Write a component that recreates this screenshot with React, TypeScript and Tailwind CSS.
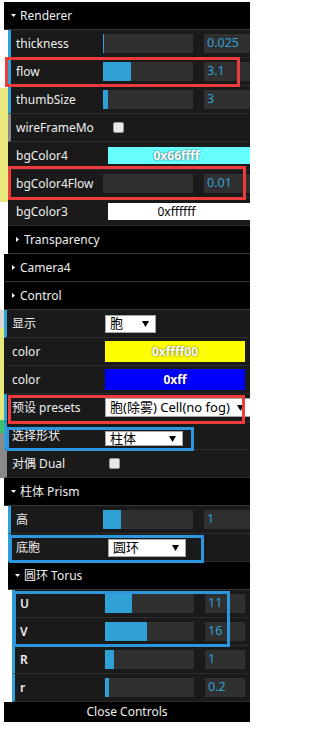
import React from 'react';

type RowProps = {
  gutter: string;
  border: string;
  labelW: string;
  label: React.ReactNode;
  labelCls?: string;
  children?: React.ReactNode;
};

// one controller line of the panel
const Row = ({ gutter, border, labelW, label, labelCls = '', children }: RowProps) => (
  <div className="flex h-[28px]">
    <div className={`shrink-0 ${gutter}`} />
    <div
      className={`flex min-w-0 flex-1 items-center overflow-hidden border-b border-l-[3px] border-b-[#2c2c2c] bg-[#1a1a1a] pl-[5px] ${border}`}
    >
      <div className={`shrink-0 overflow-hidden whitespace-nowrap text-[12px] text-[#eee] ${labelW} ${labelCls}`}>
        {label}
      </div>
      {children}
    </div>
  </div>
);

const Folder = ({ gutter, title, open }: { gutter: string; title: string; open: boolean }) => (
  <div className="flex h-[28px]">
    <div className={`shrink-0 ${gutter}`} />
    <div className="flex flex-1 items-center gap-[4px] border-b border-[#353535] bg-black pl-[7px] text-[12px] text-[#eee]">
      <span className="flex h-[5px] w-[5px] shrink-0 items-center justify-center">
        {open ? (
          <svg width="5" height="3" viewBox="0 0 5 3">
            <polygon points="0,0 5,0 2.5,3" fill="#fff" />
          </svg>
        ) : (
          <svg width="3" height="5" viewBox="0 0 3 5">
            <polygon points="0,0 3,2.5 0,5" fill="#fff" />
          </svg>
        )}
      </span>
      <span className="whitespace-nowrap">{title}</span>
    </div>
  </div>
);

const Slider = ({ fill, w, vw, value }: { fill: number; w: string; vw: string; value: string }) => (
  <>
    <div className={`h-[19px] shrink-0 bg-[#303030] ${w}`}>
      <div className="h-full bg-[#2fa1d6]" style={{ width: fill }} />
    </div>
    <div
      className={`ml-[11px] flex h-[19px] shrink-0 items-center bg-[#303030] pl-[3px] text-[12.5px] text-[#2fa1d6] ${vw}`}
    >
      {value}
    </div>
  </>
);

const Select = ({ text, cls }: { text: string; cls: string }) => (
  <div
    className={`flex shrink-0 items-center justify-between border border-[#a6a6a6] bg-white pl-[4px] pr-[6px] text-[13px] leading-none text-black ${cls}`}
  >
    <span className="whitespace-nowrap">{text}</span>
    <svg width="7" height="6" viewBox="0 0 7 6" className="shrink-0">
      <polygon points="0,0 7,0 3.5,6" fill="#000" />
    </svg>
  </div>
);

const Check = () => (
  <div className="h-[11px] w-[11px] shrink-0 rounded-[2px] border border-[#9a9a9a] bg-[#e8e8e8]" />
);

const BLUE = 'border-l-[#2fa1d6]';
const GRAY = 'border-l-[#888888]';
const DARK = 'border-l-[#1a1a1a]';

export default function App() {
  return (
    <div className="relative h-[731px] w-[250px] overflow-hidden bg-white pt-[2px] font-['Noto_Sans','Noto_Sans_CJK_SC',sans-serif]">
      <Folder gutter="w-[4px] bg-white" title="Renderer" open />
      <Row gutter="w-[8px] bg-white" border={BLUE} labelW="w-[87px]" label="thickness">
        <Slider fill={1} w="w-[90px]" vw="w-[60px]" value="0.025" />
      </Row>
      <Row gutter="w-[8px] bg-white" border={BLUE} labelW="w-[87px]" label="flow">
        <Slider fill={28} w="w-[90px]" vw="w-[60px]" value="3.1" />
      </Row>
      <Row
        gutter="w-[8px] bg-[linear-gradient(to_bottom,#fff_2px,#e9e87d_2px)]"
        border={BLUE}
        labelW="w-[87px]"
        label="thumbSize"
      >
        <Slider fill={5} w="w-[90px]" vw="w-[60px]" value="3" />
      </Row>
      <Row gutter="w-[8px] bg-[#e9e87d]" border={GRAY} labelW="w-[97px]" label="wireFrameMo">
        <Check />
      </Row>
      <Row gutter="w-[8px] bg-[#e9e87d]" border={DARK} labelW="w-[92px]" label="bgColor4">
        <div className="flex h-[17px] w-[142px] shrink-0 items-center justify-center bg-[#66ffff] pr-[5px] text-[12px] font-bold text-white [text-shadow:0_0_2px_rgba(0,0,0,0.75)]">
          0x66ffff
        </div>
      </Row>
      <Row gutter="w-[8px] bg-[#e9e87d]" border={BLUE} labelW="w-[87px]" label="bgColor4Flow">
        <Slider fill={0} w="w-[90px]" vw="w-[60px]" value="0.01" />
      </Row>
      <Row
        gutter="w-[8px] bg-[linear-gradient(to_bottom,#e9e87d_4px,#fff_4px)]"
        border={DARK}
        labelW="w-[92px]"
        label="bgColor3"
      >
        <div className="flex h-[17px] w-[142px] shrink-0 items-center justify-center bg-white pr-[5px] text-[12px] text-black">
          0xffffff
        </div>
      </Row>
      <Folder gutter="w-[8px] bg-white" title="Transparency" open={false} />
      <Folder gutter="w-[4px] bg-white" title="Camera4" open={false} />
      <Folder gutter="w-[4px] bg-white" title="Control" open={false} />
      <Row
        gutter="w-[4px] bg-[linear-gradient(to_bottom,#d6d6d6_18px,#e9e87d_18px)]"
        border={BLUE}
        labelW="w-[93px]"
        label="显示"
      >
        <Select text="胞" cls="h-[18px] w-[51px]" />
      </Row>
      <Row gutter="w-[4px] bg-[#e9e87d]" border={DARK} labelW="w-[93px]" label="color">
        <div className="flex h-[21px] w-[140px] shrink-0 items-center justify-center bg-[#ffff00] text-[12px] font-bold text-white [text-shadow:0_0_2px_rgba(0,0,0,0.75)]">
          0xffff00
        </div>
      </Row>
      <Row gutter="w-[4px] bg-[#e9e87d]" border={DARK} labelW="w-[93px]" label="color">
        <div className="flex h-[21px] w-[140px] shrink-0 items-center justify-center bg-[#0000ff] text-[12px] font-bold text-white [text-shadow:0_0_2px_rgba(0,0,0,0.75)]">
          0xff
        </div>
      </Row>
      <Row
        gutter="w-[4px] bg-[linear-gradient(to_bottom,#e9e87d_26px,#3dc46a_26px)]"
        border={BLUE}
        labelW="w-[93px]"
        label="预设 presets"
      >
        <Select text="胞(除雾) Cell(no fog)" cls="h-[19px] w-[146px]" />
      </Row>
      <Row
        gutter="w-[4px] bg-[linear-gradient(to_bottom,#3dc46a_11px,#8a8a8a_11px)]"
        border={BLUE}
        labelW="w-[93px]"
        label="选择形状"
      >
        <Select text="柱体" cls="mt-[6px] h-[15px] w-[78px]" />
      </Row>
      <Row gutter="w-[4px] bg-[#8a8a8a]" border={GRAY} labelW="w-[97px]" label="对偶 Dual">
        <Check />
      </Row>
      <Folder gutter="w-[4px] bg-white" title="柱体 Prism" open />
      <Row gutter="w-[8px] bg-white" border={BLUE} labelW="w-[87px]" label="高">
        <Slider fill={18} w="w-[90px]" vw="w-[60px]" value="1" />
      </Row>
      <Row gutter="w-[8px] bg-white" border={BLUE} labelW="w-[92px]" label="底胞">
        <Select text="圆环" cls="h-[18px] w-[78px]" />
      </Row>
      <Folder gutter="w-[8px] bg-white" title="圆环 Torus" open />
      <Row gutter="w-[12px] bg-white" border={BLUE} labelW="w-[85px]" labelCls="font-semibold" label="U">
        <Slider fill={27} w="w-[89px]" vw="w-[40px]" value="11" />
      </Row>
      <Row gutter="w-[12px] bg-white" border={BLUE} labelW="w-[85px]" labelCls="font-semibold" label="V">
        <Slider fill={42} w="w-[89px]" vw="w-[40px]" value="16" />
      </Row>
      <Row gutter="w-[12px] bg-white" border={BLUE} labelW="w-[85px]" labelCls="font-semibold" label="R">
        <Slider fill={9} w="w-[89px]" vw="w-[40px]" value="1" />
      </Row>
      <Row gutter="w-[12px] bg-white" border={BLUE} labelW="w-[85px]" labelCls="font-semibold" label="r">
        <Slider fill={4} w="w-[89px]" vw="w-[40px]" value="0.2" />
      </Row>
      <div className="flex h-[20px]">
        <div className="w-[4px] shrink-0 bg-white" />
        <div className="flex flex-1 items-center justify-center bg-black text-[12px] text-[#eee]">Close Controls</div>
      </div>

      {/* annotation boxes drawn over the panel */}
      <div className="pointer-events-none absolute left-[5px] top-[57px] h-[30px] w-[235px] border-[3px] border-[#ee3b3b]" />
      <div className="pointer-events-none absolute left-[8px] top-[166px] h-[34px] w-[238px] border-[3px] border-[#ee3b3b]" />
      <div className="pointer-events-none absolute left-[8px] top-[395px] h-[29px] w-[237px] border-[3px] border-[#ee3b3b]" />
      <div className="pointer-events-none absolute left-[6px] top-[427px] h-[24px] w-[188px] border-[3px] border-[#2c96df]" />
      <div className="pointer-events-none absolute left-[9px] top-[535px] h-[28px] w-[195px] border-[3px] border-[#2c96df]" />
      <div className="pointer-events-none absolute left-[13px] top-[591px] h-[56px] w-[217px] border-[3px] border-[#2c96df]" />
    </div>
  );
}
